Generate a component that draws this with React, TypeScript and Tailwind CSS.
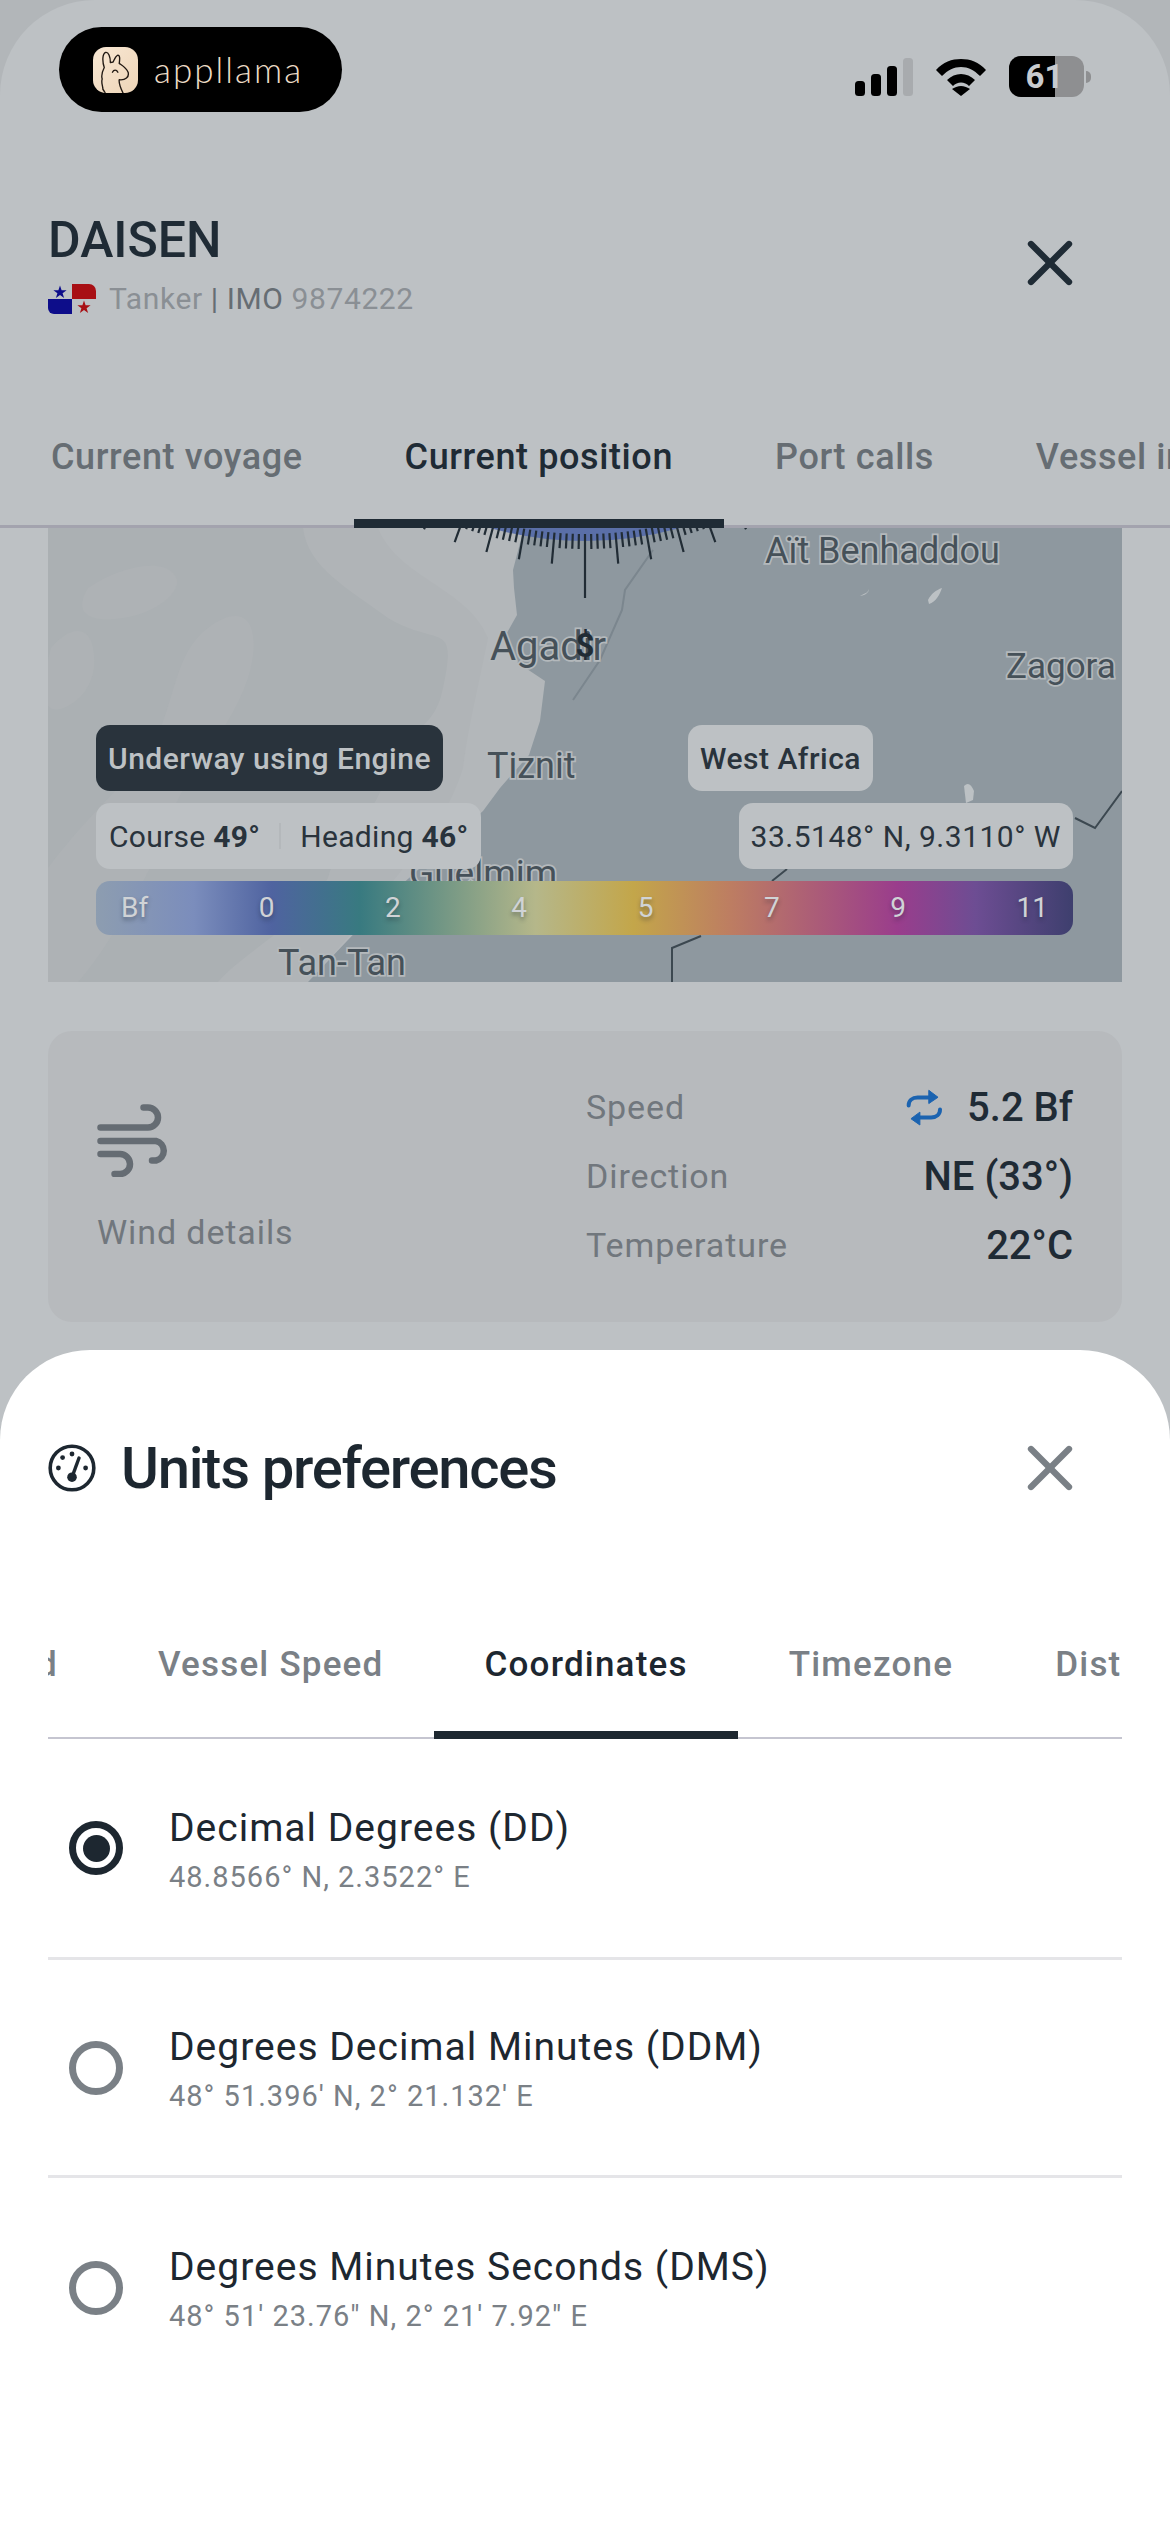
import { X } from "lucide-react";

const barLabels = ["Bf", "0", "2", "4", "5", "7", "9", "11"];

const places = [
  { name: "Aït Benhaddou", x: 717, y: 35, size: 36 },
  { name: "Agadir", x: 442, y: 132, size: 40 },
  { name: "Zagora", x: 958, y: 150, size: 35 },
  { name: "Tiznit", x: 439, y: 250, size: 36 },
  { name: "Guelmim", x: 361, y: 358, size: 37 },
  { name: "Tan-Tan", x: 230, y: 447, size: 36 },
];

const options = [
  { title: "Decimal Degrees (DD)", sub: "48.8566° N, 2.3522° E", on: true },
  { title: "Degrees Decimal Minutes (DDM)", sub: "48° 51.396' N, 2° 21.132' E", on: false },
  { title: "Degrees Minutes Seconds (DMS)", sub: "48° 51' 23.76\" N, 2° 21' 7.92\" E", on: false },
];

function Ticks() {
  const cx = 537;
  const cy = -344;
  const rows = [];
  for (let a = -32; a <= 32; a++) {
    const r = a === 0 ? 414 : a % 5 === 0 ? 381 : 365;
    const rad = (a * Math.PI) / 180;
    rows.push(
      <line
        key={a}
        x1={cx + 350 * Math.sin(rad)}
        y1={cy + 350 * Math.cos(rad)}
        x2={cx + r * Math.sin(rad)}
        y2={cy + r * Math.cos(rad)}
        stroke="#212c35"
        strokeWidth="2.2"
      />
    );
  }
  return <g>{rows}</g>;
}

function MapArt() {
  return (
    <svg width="1074" height="454" viewBox="0 0 1074 454" className="block">
      <rect width="1074" height="454" fill="#abb0b3" />
      <path d="M40 60C70 40 110 30 125 45S110 85 75 90 25 85 40 60Z" fill="#aeb2b5" />
      <path d="M3 120C20 100 40 95 45 120S40 170 15 180 -5 150 3 120Z" fill="#aeb2b5" />
      <path d="M0 454V340C30 300 70 260 90 240 130 190 120 130 160 100 200 70 215 100 200 150 180 210 130 250 120 300 100 350 60 420 30 454Z" fill="#aeb2b5" />
      <path d="M255 0C260 40 300 60 340 90 390 120 410 90 395 160 385 210 350 200 340 240 330 290 290 310 280 350 250 400 200 420 170 454H1074V0Z" fill="#b0b4b7" />
      <path d="M330 0C350 50 420 60 440 110 430 160 420 200 415 240 400 290 370 320 340 360 310 400 290 420 260 454H1074V0Z" fill="#b3b7ba" />
      <path d="M476 0L472 15 465 42 466 60 469 87 456 110 470 135 497 153 492 193 481 227 452 260 435 283 350 360 299 413 260 454H1074V0Z" fill="#8e989f" />
      <path d="M605 22 577 62 574 82 552 132 525 172" fill="none" stroke="#7b868e" strokeWidth="2" />
      <path d="M739 341 724 353M653 408 624 420V454M1027 290 1047 300 1074 263" fill="none" stroke="#3c4850" strokeWidth="2" />
      <path d="M812 68c6-1 9-4 9-7-1 4-4 4-9 7ZM880 72c3-6 8-10 14-12-2 6-6 14-13 16Z" fill="#bcc1c4" />
      <path d="M916 258c4-4 7-2 10 5l-1 9-7 3Z" fill="#bcc1c4" />
      <path d="M442 0A357 357 0 0 0 632 0Z" fill="#5a6fa8" />
      <Ticks />
      {places.map((p) => (
        <text
          key={p.name}
          x={p.x}
          y={p.y}
          fill="#465159"
          stroke="#b4b9bc"
          strokeWidth="3.5"
          paintOrder="stroke"
          fontSize={p.size}
          fontFamily="Roboto, sans-serif"
        >
          {p.name}
        </text>
      ))}
      <text x="537" y="129" textAnchor="middle" fill="#212c35" fontSize="33" fontWeight="700" fontFamily="Roboto, sans-serif">
        $
      </text>
    </svg>
  );
}

function Llama() {
  return (
    <div className="w-[45px] h-[46px] rounded-[13px] bg-gradient-to-br from-[#f8e8d4] to-[#eed5b8] overflow-hidden">
      <svg width="45" height="46" viewBox="28 18 130 135" fill="none" stroke="#221a14" strokeWidth="4" strokeLinecap="round" strokeLinejoin="round">
        <path d="M116 155C106 135 102 125 104 114 122 116 134 106 130 92 124 78 112 72 104 66 106 52 106 42 100 42 94 44 90 54 86 62L78 64C78 46 72 32 64 34 54 38 54 60 60 78 54 90 50 100 54 112 50 122 56 132 56 142 60 148 62 152 64 155" />
        <path d="M84 92C88 84 96 84 100 92" />
      </svg>
    </div>
  );
}

function StatusIcons() {
  return (
    <div className="flex items-center gap-[22px]">
      <svg width="58" height="38" viewBox="0 0 58 38">
        <rect x="0" y="23" width="10" height="15" rx="3.5" fill="#000" />
        <rect x="16" y="16" width="10" height="22" rx="3.5" fill="#000" />
        <rect x="32" y="8" width="10" height="30" rx="3.5" fill="#000" />
        <rect x="48" y="0" width="10" height="38" rx="3.5" fill="#a8abae" />
      </svg>
      <svg width="52" height="38" viewBox="0 0 52 38">
        <path d="M1 12C8 4 17 1 26 1S44 4 51 12L45 18C39 12 33 9 26 9S13 12 7 18Z" fill="#000" />
        <path d="M12 22C16 18 21 16 26 16S36 18 40 22L34 28C32 26 29 24.500 26 24.500S20 26 18 28Z" fill="#000" />
        <path d="M26 38 17 31C19 29.500 23 28 26 28S33 29.500 35 31Z" fill="#000" />
      </svg>
      <div className="flex items-center gap-[2px]">
        <div className="relative w-[75px] h-[41px] rounded-[12px] overflow-hidden bg-[#8e8f91]">
          <div className="w-[46px] h-full bg-black" />
          <span className="absolute inset-0 flex items-center justify-center pr-[4px] text-[33px] leading-none font-bold text-[#c8cbce]">61</span>
        </div>
        <div className="w-[5px] h-[12px] rounded-r-full bg-[#8e8f91]" />
      </div>
    </div>
  );
}

function Flag() {
  return (
    <svg width="48" height="30" viewBox="0 0 48 30">
      <path d="M24 0H41a7 7 0 0 1 7 7V15H24Z" fill="#a80f14" />
      <path d="M0 15H24V30H6a6 6 0 0 1-6-6Z" fill="#0d0d8a" />
      <path d="M12 1.500 13.600 6.300H18.600L14.600 9.200 16.100 14 12 11 7.900 14 9.400 9.200 5.400 6.300H10.400Z" fill="#0d0d8a" />
      <path d="M36 16.500 37.600 21.300H42.600L38.600 24.200 40.100 29 36 26 31.900 29 33.400 24.200 29.400 21.300H34.400Z" fill="#a80f14" />
    </svg>
  );
}

function WindIcon() {
  return (
    <svg width="75" height="76" viewBox="15 13 75 76" fill="none" stroke="#656c73" strokeWidth="6.500" strokeLinecap="round">
      <path d="M18.500 39.500H66a10 10 0 0 0 0-20h-4.500" />
      <path d="M18.500 53H74a10 10 0 0 1 0 19.500H70" />
      <path d="M18.500 66H38a10 10 0 0 1 0 20h-5.500" />
    </svg>
  );
}

function SyncIcon() {
  return (
    <svg width="37" height="37" viewBox="50 26 110 112">
      <path d="M57 76C57 62 68 52 84 52H125M152 88C152 102 141 112 125 112H84" fill="none" stroke="#1b63b0" strokeWidth="12" strokeLinecap="round" />
      <path d="M118 30 146 51 118 70Z M91 96 64 116 91 135Z" fill="#1b63b0" stroke="#1b63b0" strokeWidth="3" strokeLinejoin="round" />
    </svg>
  );
}

function GaugeIcon() {
  return (
    <svg width="48" height="48" viewBox="0 0 24 24" fill="#1d2730">
      <circle cx="12" cy="12" r="10.900" fill="none" stroke="#1d2730" strokeWidth="1.800" />
      <circle cx="12" cy="5" r="1.200" />
      <circle cx="7.300" cy="6.800" r="1.200" />
      <circle cx="5.200" cy="12" r="1.200" />
      <circle cx="18.800" cy="12" r="1.200" />
      <circle cx="12" cy="16.600" r="2.400" />
      <path d="M12 16.600 15.500 7" stroke="#1d2730" strokeWidth="1.700" strokeLinecap="round" />
    </svg>
  );
}

export default function App() {
  return (
    <div className="w-[1170px] h-[2532px] overflow-hidden bg-[#b2b6b9] font-['Roboto',sans-serif]">
      <div className="h-[1350px] rounded-t-[95px] bg-[#bdc1c4]">
        <div className="flex items-center justify-between h-[112px] pt-[27px] pl-[59px] pr-[79px]">
          <div className="flex items-center gap-[16px] w-[283px] h-[85px] pl-[34px] rounded-full bg-black">
            <Llama />
            <span className="font-['Lato',sans-serif] font-light text-[35px] tracking-[2px] leading-none text-[#ecdcc6]">appllama</span>
          </div>
          <div className="translate-y-[7px]">
            <StatusIcons />
          </div>
        </div>

        <div className="flex items-start justify-between h-[192px] pl-[48px] pr-[82px]">
          <div className="pt-[99px]">
            <h1 className="text-[50px] leading-[58px] font-medium text-[#1f2b35]">DAISEN</h1>
            <div className="flex items-center gap-[13px] mt-[12px]">
              <Flag />
              <span className="text-[30px] leading-[36px] tracking-[0.6px] text-[#8a8f94]">
                Tanker <span className="text-[#666d73]">| IMO</span> 9874222
              </span>
            </div>
          </div>
          <X size={76} strokeWidth={2} className="mt-[113px] text-[#1f2b35]" />
        </div>

        <div className="flex overflow-hidden">
          {[
            { name: "Current voyage", on: false },
            { name: "Current position", on: true },
            { name: "Port calls", on: false },
            { name: "Vessel info", on: false },
          ].map((t) => (
            <div
              key={t.name}
              className={
                t.on
                  ? "shrink-0 px-[51px] h-[224px] flex items-end pb-[40px] border-b-[9px] border-[#1f2b35] text-[36px] leading-[44px] tracking-[0.6px] font-medium text-[#1f2b35]"
                  : "shrink-0 px-[51px] h-[224px] flex items-end pb-[46px] border-b-[3px] border-[#a3a3ae] text-[36px] leading-[44px] tracking-[0.6px] font-medium text-[#666d73]"
              }
            >
              {t.name}
            </div>
          ))}
        </div>

        <div className="relative mx-[48px] h-[454px] overflow-hidden">
          <MapArt />
          <div className="absolute left-[48px] right-[49px] bottom-[47px] flex flex-col gap-[12px]">
            <div className="flex items-center">
              <div className="flex items-center h-[66px] px-[12px] rounded-[14px] bg-[#29333c] text-[#bdc1c4] text-[30px] tracking-[0.5px] font-medium">Underway using Engine</div>
              <div className="flex items-center h-[66px] ml-[245px] px-[12px] rounded-[14px] bg-[#bdc1c4] text-[#29333c] text-[30px] tracking-[0.5px] font-medium">West Africa</div>
            </div>
            <div className="flex items-center justify-between">
              <div className="flex items-center h-[66px] px-[13px] rounded-[14px] bg-[#bdc1c4] text-[#29333c] text-[30px] tracking-[0.3px]">
                <span>Course <b className="font-bold">49°</b></span>
                <span className="w-[2px] h-[26px] mx-[19px] bg-[#b4b8bb]" />
                <span>Heading <b className="font-bold">46°</b></span>
              </div>
              <div className="flex items-center h-[66px] px-[12px] rounded-[14px] bg-[#bdc1c4] text-[#29333c] text-[30px] tracking-[0.5px]">33.5148° N, 9.3110° W</div>
            </div>
            <div className="flex items-center justify-between h-[54px] px-[25px] rounded-[14px] bg-[linear-gradient(90deg,#8d9db0_0%,#7b8dbc_10%,#4f63a0_18%,#387a80_27%,#b5b78a_45%,#c3a64a_55%,#bd7d62_65%,#9a3d8c_82%,#6d4d93_90%,#3e3f6e_100%)]">
              {barLabels.map((l) => (
                <span key={l} className="text-[28px] leading-none text-[#d0d3d6] [text-shadow:0_3px_4px_rgba(30,40,50,0.4)]">{l}</span>
              ))}
            </div>
          </div>
        </div>

        <div className="flex items-center h-[291px] mx-[48px] mt-[49px] pl-[49px] pr-[49px] rounded-[24px] bg-[#b7babd]">
          <div className="flex flex-col w-[489px]">
            <WindIcon />
            <span className="mt-[35px] text-[34px] leading-[40px] tracking-[0.9px] text-[#71777d]">Wind details</span>
          </div>
          <div className="flex flex-col flex-1 gap-[19px]">
            <div className="flex items-center justify-between h-[50px]">
              <span className="text-[34px] tracking-[0.9px] text-[#71777d]">Speed</span>
              <span className="flex items-center gap-[24px] text-[40px] font-medium text-[#1f2b35]"><SyncIcon />5.2 Bf</span>
            </div>
            <div className="flex items-center justify-between h-[50px]">
              <span className="text-[34px] tracking-[0.9px] text-[#71777d]">Direction</span>
              <span className="text-[40px] font-medium text-[#1f2b35]">NE (33°)</span>
            </div>
            <div className="flex items-center justify-between h-[50px]">
              <span className="text-[34px] tracking-[0.9px] text-[#71777d]">Temperature</span>
              <span className="text-[40px] font-medium text-[#1f2b35]">22°C</span>
            </div>
          </div>
        </div>
      </div>

      <div className="bg-[#bdc1c4]">
        <div className="h-[1182px] rounded-t-[90px] bg-white">
          <div className="flex items-center justify-between h-[236px] pl-[48px] pr-[82px]">
            <div className="flex items-center gap-[25px]">
              <GaugeIcon />
              <h2 className="text-[58px] leading-[64px] tracking-[-1.3px] font-medium text-[#1d2730]">Units preferences</h2>
            </div>
            <X size={76} strokeWidth={2} className="text-[#7a8086]" />
          </div>

          <div className="flex mx-[48px] overflow-hidden">
            <div className="flex justify-end shrink-0 w-[59px] h-[153px] pr-[49px] pt-[57px] overflow-hidden border-b-[2px] border-[#c5c5d0] text-[35px] leading-[44px] tracking-[1.2px] font-medium text-[#7a8086]">
              <span className="shrink-0">Wind</span>
            </div>
            {["Vessel Speed", "Coordinates", "Timezone", "Distance"].map((t) => (
              <div
                key={t}
                className={
                  t === "Coordinates"
                    ? "shrink-0 h-[153px] px-[50px] pt-[57px] border-b-[8px] border-[#1d2730] text-[35px] leading-[44px] tracking-[1.2px] font-medium text-[#1d2730]"
                    : "shrink-0 h-[153px] px-[51px] pt-[57px] border-b-[2px] border-[#c5c5d0] text-[35px] leading-[44px] tracking-[1.2px] font-medium text-[#7a8086]"
                }
              >
                {t}
              </div>
            ))}
          </div>

          <div className="mx-[48px]">
            {options.map((o, i) => (
              <div
                key={o.title}
                className={
                  i === 0
                    ? "flex items-center h-[221px] pl-[21px] border-b-[3px] border-[#e5e5e8]"
                    : i === 1
                    ? "flex items-center h-[218px] pl-[21px] border-b-[3px] border-[#e5e5e8]"
                    : "flex items-center h-[219px] pl-[21px]"
                }
              >
                <div className={o.on ? "flex items-center justify-center w-[54px] h-[54px] rounded-full border-[7px] border-[#1d2730]" : "w-[54px] h-[54px] rounded-full border-[7px] border-[#7a8086]"}>
                  {o.on && <div className="w-[27px] h-[27px] rounded-full bg-[#1d2730]" />}
                </div>
                <div className="ml-[46px] pt-[3px]">
                  <div className="text-[39px] leading-[46px] tracking-[1px] text-[#1d2730]">{o.title}</div>
                  <div className="mt-[8px] text-[29px] leading-[36px] tracking-[1px] text-[#7a8086]">{o.sub}</div>
                </div>
              </div>
            ))}
          </div>
        </div>
      </div>
    </div>
  );
}
